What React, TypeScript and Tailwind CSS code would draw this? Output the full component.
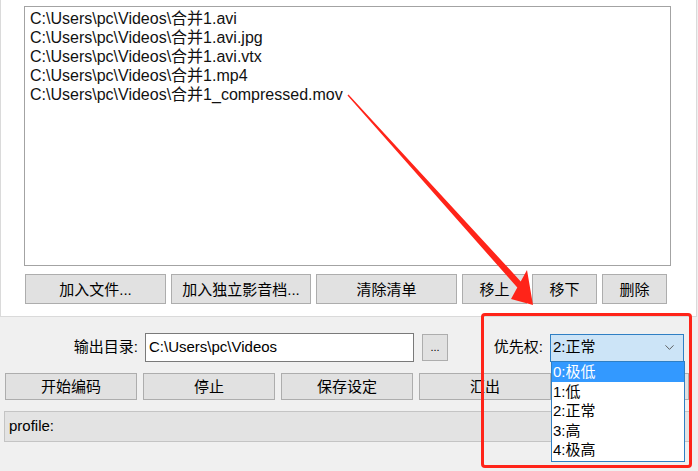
import { ChevronDown } from "lucide-react"

const files = [
    "C:\\Users\\pc\\Videos\\合并1.avi",
    "C:\\Users\\pc\\Videos\\合并1.avi.jpg",
    "C:\\Users\\pc\\Videos\\合并1.avi.vtx",
    "C:\\Users\\pc\\Videos\\合并1.mp4",
    "C:\\Users\\pc\\Videos\\合并1_compressed.mov",
]

const priorities = ["0:极低", "1:低", "2:正常", "3:高", "4:极高"]

const Btn = ({ label, w }: { label: string, w: string }) => (
    <button className={`${w} h-full shrink-0 bg-[#e1e1e1] border border-[#adadad] text-[15px] leading-none text-black`}>
        {label}
    </button>
)

export default function App() {
    return (
        <div
            className="relative w-[698px] h-[471px] overflow-hidden bg-[#f0f0f0] text-black"
            style={{ fontFamily: '"Liberation Sans", "Noto Sans CJK SC", sans-serif' }}
        >
            {/* file list panel */}
            <div className="w-[697px] h-[317px] bg-white border-l border-r border-b border-[#dadada] flex flex-col">
                <div className="ml-[23px] mt-[6px] w-[647px] h-[260px] border border-[#a3a3a3] pl-[5px] pt-[2px] text-[16px] leading-[19px] text-[#111]">
                    {files.map(f => (
                        <div key={f}>{f}</div>
                    ))}
                </div>
                <div className="ml-[24px] mt-[8px] h-[30px] flex gap-[5px]">
                    <Btn label="加入文件..." w="w-[141px]" />
                    <Btn label="加入独立影音档..." w="w-[140px]" />
                    <Btn label="清除清单" w="w-[141px]" />
                    <Btn label="移上" w="w-[65px]" />
                    <Btn label="移下" w="w-[65px]" />
                    <Btn label="删除" w="w-[65px]" />
                </div>
            </div>

            {/* output settings */}
            <div className="flex flex-col">
                <div className="mt-[16px] h-[29px] flex items-center text-[15px]">
                    <div className="w-[138px] text-right">输出目录:</div>
                    <div className="ml-[7px] w-[269px] h-full bg-white border border-[#7a7a7a] flex items-center pl-[3px]">
                        C:\Users\pc\Videos
                    </div>
                    <button className="ml-[8px] w-[26px] h-[27px] bg-[#e1e1e1] border border-[#adadad] text-[11px] leading-none">
                        ...
                    </button>
                    <div className="w-[95px] text-right">优先权:</div>
                    <div className="ml-[7px] w-[134px] h-[28px] bg-[#cce4f7] border border-[#2f7fc4] flex items-center justify-between pl-[2px] pr-[6px]">
                        <span>2:正常</span>
                        <ChevronDown size={15} strokeWidth={1.5} className="text-[#555]" />
                    </div>
                </div>
                <div className="mt-[11px] ml-[5px] h-[27px] flex gap-[6px]">
                    <Btn label="开始编码" w="w-[132px]" />
                    <Btn label="停止" w="w-[132px]" />
                    <Btn label="保存设定" w="w-[132px]" />
                    <Btn label="汇出" w="w-[132px]" />
                    <Btn label="" w="w-[132px]" />
                </div>
                <div className="mt-[11px] ml-[4px] w-[686px] h-[31px] bg-[#e3e3e3] border border-[#c4c4c4] flex items-center pl-[4px] text-[15px]">
                    profile:
                </div>
            </div>

            {/* open dropdown list */}
            <div className="absolute left-[551px] top-[361px] w-[134px] h-[101px] bg-white border border-[#2f7fc4] text-[15px] leading-[19.5px]">
                {priorities.map((p, i) => (
                    <div
                        key={p}
                        className={i === 0 ? "bg-[#3399ff] text-white pl-[1px]" : "pl-[1px]"}
                    >
                        {p}
                    </div>
                ))}
            </div>

            {/* annotation */}
            <div className="absolute left-[481px] top-[313px] w-[211px] h-[155px] border-[3px] border-[#ff2419] rounded-[4px]" />
            <svg className="absolute inset-0 pointer-events-none" width="698" height="471">
                <polygon
                    fill="#ff2419"
                    points="348.5,94.5 520.7,281.4 527,270 533,305 511,299 517.3,287.6 347.5,95.5"
                />
            </svg>
        </div>
    )
}
